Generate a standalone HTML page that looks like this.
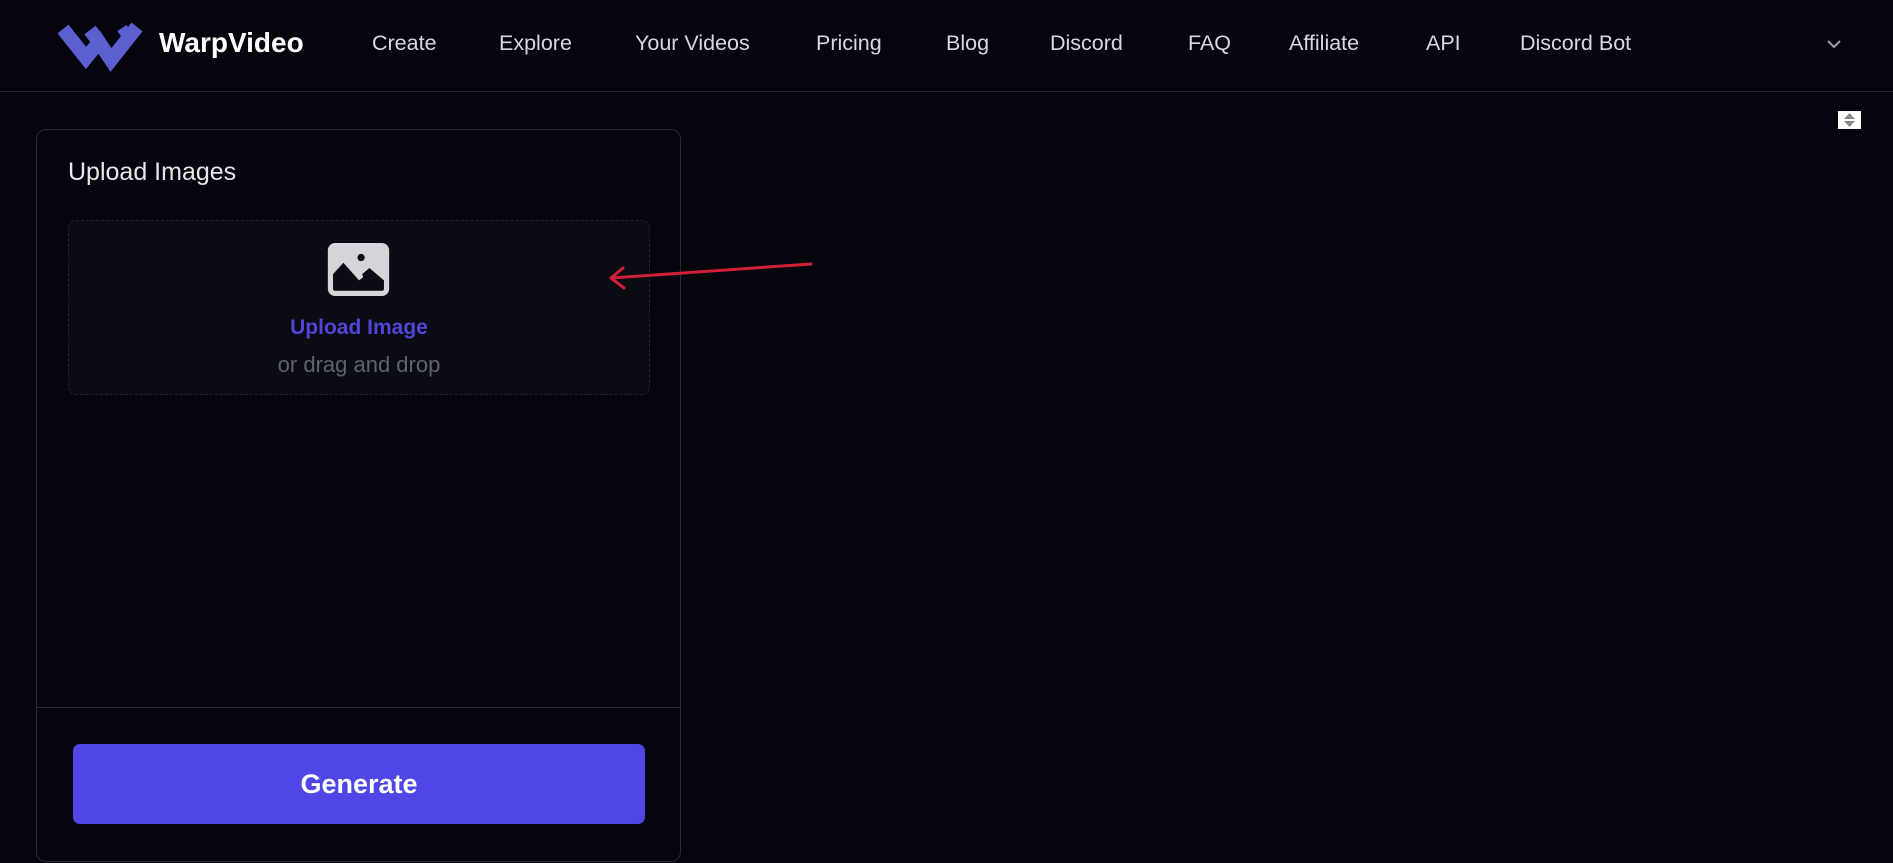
<!DOCTYPE html>
<html><head><style>
*{margin:0;padding:0;box-sizing:border-box}
body{width:1893px;height:863px;background:#05050e;font-family:"Liberation Sans",sans-serif;position:relative;overflow:hidden;color:#e5e7eb}
.hdr{position:absolute;left:0;top:0;width:1893px;height:92px;border-bottom:1px solid #24242e}
.nav{position:absolute;top:31px;font-size:21.5px;color:#d8d9de}
.panel{position:absolute;left:36px;top:129px;width:645px;height:733px;border:1px solid #2b2b36;border-radius:10px}
.drop{position:absolute;left:68px;top:220px;width:582px;height:175px;border:1px dashed #24242e;border-radius:8px;background:#0b0b13}
</style></head><body>
<div class="hdr">
<svg style="position:absolute;left:0;top:0" width="160" height="90">
<polyline points="63,29 86,58 99,42 111,60 137,27" stroke="#5b5fd0" stroke-width="14" fill="none" stroke-linejoin="miter"/>
<polyline points="90,30 99,42" stroke="#5b5fd0" stroke-width="14" fill="none"/>
<polyline points="122,28 128,37" stroke="#5b5fd0" stroke-width="11" fill="none"/>
</svg>
<div style="position:absolute;left:159px;top:27px;font-size:28px;font-weight:bold;color:#fff">WarpVideo</div>
<div class="nav" style="left:372px">Create</div>
<div class="nav" style="left:499px">Explore</div>
<div class="nav" style="left:635px">Your Videos</div>
<div class="nav" style="left:816px">Pricing</div>
<div class="nav" style="left:946px">Blog</div>
<div class="nav" style="left:1050px">Discord</div>
<div class="nav" style="left:1188px">FAQ</div>
<div class="nav" style="left:1289px">Affiliate</div>
<div class="nav" style="left:1426px">API</div>
<div class="nav" style="left:1520px">Discord Bot</div>
<svg style="position:absolute;left:1826px;top:39px" width="16" height="10" viewBox="0 0 16 10"><path d="M2 2 L8 8 L14 2" stroke="#a0a0aa" stroke-width="2" fill="none"/></svg>
</div>
<div style="position:absolute;left:1838px;top:111px;width:23px;height:18px;background:#fff"><svg width="23" height="18"><path d="M6 8 L11.5 2 L17 8Z M6 10 L11.5 16 L17 10Z" fill="#888"/></svg></div>
<div class="panel">
<div style="position:absolute;left:31px;top:28px;font-size:25px;color:#e5e7eb">Upload Images</div>
<div style="position:absolute;left:0;top:577px;width:643px;height:1px;background:#2b2b36"></div>
<div style="position:absolute;left:36px;top:614px;width:572px;height:80px;background:#4f46e5;border-radius:7px;color:#fff;font-size:27px;font-weight:bold;text-align:center;line-height:80px">Generate</div>
</div>
<div class="drop">
<svg style="position:absolute;left:257px;top:22px" width="65" height="53" viewBox="0 0 59 51">
<rect x="0" y="0" width="59" height="51" rx="7" fill="#d4d5da"/>
<path d="M5 30 L15 19 L30 36 L34 33 L33 30 L40 24 L54 36 L54 44 Q54 46 52 46 L7 46 Q5 46 5 44 Z" fill="#0b0b13"/>
<circle cx="32" cy="14" r="3.5" fill="#0b0b13"/>
</svg>
<div style="position:absolute;left:0;width:100%;top:95px;text-align:center;font-size:21px;font-weight:bold;color:#5046d8">Upload Image</div>
<div style="position:absolute;left:0;width:100%;top:131px;text-align:center;font-size:22px;color:#5f636d">or drag and drop</div>
</div>
<svg style="position:absolute;left:0;top:0" width="1893" height="863"><path d="M811 264 L611 278 M623 268 L611 278 L624 288" stroke="#d21f35" stroke-width="3" fill="none" stroke-linecap="round" stroke-linejoin="round"/></svg>
</body></html>
